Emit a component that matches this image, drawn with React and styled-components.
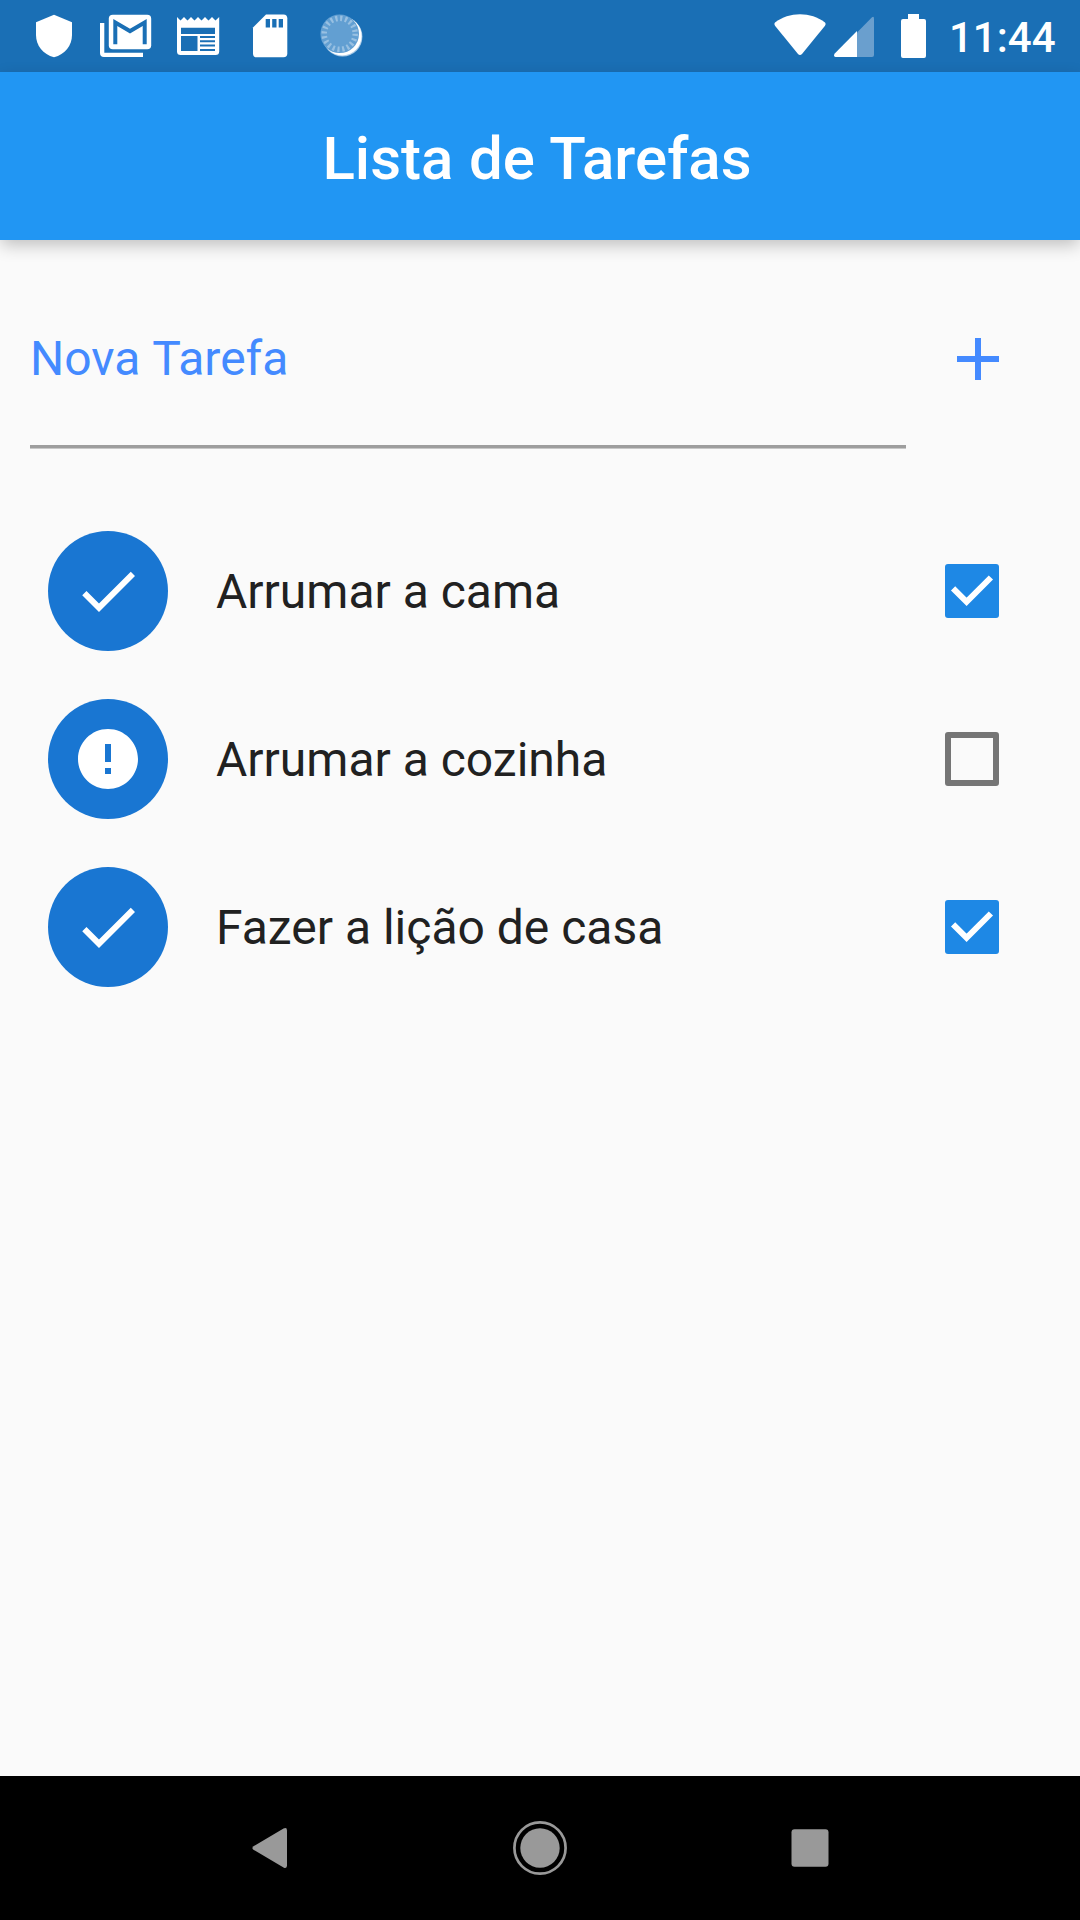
import React, { useState } from 'react';
import styled, { createGlobalStyle } from 'styled-components';

const primary = '#2196f3';
const primaryDark = '#1a6fb5';
const avatarBlue = '#1976d2';
const checkboxBlue = '#1e88e5';
const accent = '#448aff';
const background = '#fafafa';
const navGray = '#999999';

const initialTasks = [
  { id: 1, title: 'Arrumar a cama', done: true },
  { id: 2, title: 'Arrumar a cozinha', done: false },
  { id: 3, title: 'Fazer a lição de casa', done: true },
];

const ShieldIcon = () => (
  <SlotIcon viewBox="0 0 72 72">
    <path
      d="M36 14.7 L54 22.3 V35 C54 45.5 47 54.5 36 57.3 C25 54.5 18 45.5 18 35 V22.3 Z"
      fill="#fff"
    />
  </SlotIcon>
);

const GmailIcon = () => (
  <SlotIcon viewBox="0 0 72 72">
    <path d="M10 23 H14.3 V52.7 H53 V57 H14 Q10 57 10 53 Z" fill="#fff" />
    <rect x="18.8" y="14.8" width="42.4" height="34.4" rx="4" fill="#fff" />
    <path
      d="M23.3 19 L40 28.8 L56.7 19 V44.3 H52.7 V26 L40 33.6 L27.3 26 V44.3 H23.3 Z"
      fill={primaryDark}
    />
  </SlotIcon>
);

const NewsIcon = () => (
  <SlotIcon viewBox="0 0 72 72">
    <path
      d="M15 17 L18.5 20.5 L22 17 L25.5 20.5 L29 17 L32.5 20.5 L36 17 L39.5 20.5 L43 17 L46.5 20.5 L50 17 L53.5 20.5 L57.2 17 V51.5 Q57.2 55 53.5 55 H18.7 Q15 55 15 51.5 Z"
      fill="#fff"
    />
    <path
      d="M19 27.7 H53 V34 H19 Z M19 36 H35.5 V51 H19 Z M38 36 H53 V38 H38 Z M38 40.3 H53 V42.3 H38 Z M38 44.6 H53 V46.6 H38 Z M38 49 H53 V51 H38 Z"
      fill={primaryDark}
    />
  </SlotIcon>
);

const SdCardIcon = () => (
  <SlotIcon viewBox="0 0 72 72">
    <path
      d="M32 14.5 H49.5 Q53.3 14.5 53.3 18.3 V53.5 Q53.3 57.3 49.5 57.3 H22.8 Q19 57.3 19 53.5 V27.5 Z"
      fill="#fff"
    />
    <path
      d="M31.7 19 H36 V27.5 H31.7 Z M38.2 19 H42.5 V27.5 H38.2 Z M44.7 19 H49 V27.5 H44.7 Z"
      fill={primaryDark}
    />
  </SlotIcon>
);

const SyncIcon = () => (
  <SlotIcon viewBox="0 0 72 72">
    <circle cx="36.6" cy="36.7" r="19.8" fill="#a9cbe8" />
    <circle cx="36.2" cy="36" r="19.4" fill="#fff" />
    <circle cx="33.7" cy="33.8" r="19.3" fill="#629fd2" />
    <circle
      cx="33.7"
      cy="33.8"
      r="15.5"
      fill="none"
      stroke="#98c0e2"
      strokeWidth="5.5"
      strokeDasharray="2.2 2.669"
    />
  </SlotIcon>
);

const MaterialIcon = ({ path, size = 72 }) => (
  <svg width={size} height={size} viewBox="0 0 24 24" fill="currentColor">
    <path d={path} />
  </svg>
);

const addPath = 'M19 13h-6v6h-2v-6H5v-2h6V5h2v6h6v2z';
const checkPath = 'M9 16.17L4.83 12l-1.42 1.41L9 19 21 7l-1.41-1.41z';
const errorPath =
  'M12 2C6.48 2 2 6.48 2 12s4.48 10 10 10 10-4.48 10-10S17.52 2 12 2zm1 15h-2v-2h2v2zm0-4h-2V7h2v6z';

const StatusBar = () => (
  <StatusContainer>
    <Notifications>
      <ShieldIcon />
      <GmailIcon />
      <NewsIcon />
      <SdCardIcon />
      <SyncIcon />
    </Notifications>
    <SystemIcons>
      <svg width="52" height="72" viewBox="0 0 52 72">
        <path
          d="M1 22.5 C15 11.5 37 11.5 51 22.5 Q52.2 24 51 25.8 L28.2 53.8 Q26 56.3 23.8 53.8 L1 25.8 Q-0.2 24 1 22.5 Z"
          fill="#fff"
        />
      </svg>
      <Signal width="40" height="72" viewBox="0 0 40 72">
        <path d="M23 32.5 L38 17.3 Q40 16 40 18.5 V55 Q40 57 38 57 H23 Z" fill="#6a9fce" />
        <path d="M23 31 V57 H1.5 Q-0.8 56.5 0.5 53.8 Z" fill="#fff" />
      </Signal>
      <Battery width="25" height="72" viewBox="0 0 25 72">
        <path
          d="M7 14 H18 V19 H23 Q25 19 25 21 V56 Q25 58 23 58 H2 Q0 58 0 56 V21 Q0 19 2 19 H7 Z"
          fill="#fff"
        />
      </Battery>
      <Clock>11:44</Clock>
    </SystemIcons>
  </StatusContainer>
);

const Checkbox = ({ checked }) => (
  <CheckboxBox $checked={checked}>
    {checked && (
      <svg width="54" height="54" viewBox="0 0 54 54">
        <path
          d="M8.1 24.3 L21.6 37.8 L45.9 13.5"
          fill="none"
          stroke="#fff"
          strokeWidth="6"
        />
      </svg>
    )}
  </CheckboxBox>
);

const Task = ({ task, onToggle }) => (
  <TaskRow onClick={() => onToggle(task.id)}>
    <Avatar>
      <MaterialIcon path={task.done ? checkPath : errorPath} />
    </Avatar>
    <TaskTitle>{task.title}</TaskTitle>
    <Checkbox checked={task.done} />
  </TaskRow>
);

const NavigationBar = () => (
  <NavContainer>
    <svg width="72" height="72" viewBox="0 0 72 72">
      <path
        d="M19.5 34.2 L49.5 16.6 Q53 15 53 18.5 V53.5 Q53 57 49.5 55.4 L19.5 37.8 Q17.3 36 19.5 34.2 Z"
        fill={navGray}
      />
    </svg>
    <svg width="72" height="72" viewBox="0 0 72 72">
      <circle cx="36" cy="36" r="25.6" fill="none" stroke={navGray} strokeWidth="2.7" />
      <circle cx="36" cy="36" r="19.7" fill={navGray} />
    </svg>
    <svg width="72" height="72" viewBox="0 0 72 72">
      <rect x="17.5" y="17.3" width="37" height="37.4" rx="3" fill={navGray} />
    </svg>
  </NavContainer>
);

const App = () => {
  const [tasks, setTasks] = useState(initialTasks);

  const handleToggle = id =>
    setTasks(tasks.map(task => (task.id === id ? { ...task, done: !task.done } : task)));

  return (
    <Screen>
      <GlobalStyle />
      <StatusBar />
      <AppBar>
        <Title>Lista de Tarefas</Title>
      </AppBar>
      <Body>
        <NewTask>
          <Field>
            <FieldLabel>Nova Tarefa</FieldLabel>
          </Field>
          <AddButton aria-label="Adicionar">
            <MaterialIcon path={addPath} />
          </AddButton>
        </NewTask>
        <TaskList>
          {tasks.map(task => (
            <Task key={task.id} task={task} onToggle={handleToggle} />
          ))}
        </TaskList>
      </Body>
      <NavigationBar />
    </Screen>
  );
};

export default App;

const GlobalStyle = createGlobalStyle`
  * {
    box-sizing: border-box;
  }

  body {
    margin: 0;
    background: ${background};
    font-family: Roboto, sans-serif;
  }

  svg {
    display: block;
    flex-shrink: 0;
  }
`;

const Screen = styled.div`
  display: flex;
  flex-direction: column;
  width: 1080px;
  height: 1920px;
  overflow: hidden;
  background: ${background};
`;

const StatusContainer = styled.div`
  display: flex;
  justify-content: space-between;
  height: 72px;
  padding: 0 25px 0 18px;
  background: ${primaryDark};
  flex-shrink: 0;
`;

const Notifications = styled.div`
  display: flex;
`;

const SlotIcon = styled.svg`
  width: 72px;
  height: 72px;
`;

const SystemIcons = styled.div`
  display: flex;
  align-items: center;
`;

const Signal = styled.svg`
  margin-left: 8px;
`;

const Battery = styled.svg`
  margin-left: 27px;
`;

const Clock = styled.span`
  width: 106px;
  margin-left: 23px;
  padding-top: 3px;
  font-size: 42px;
  font-weight: 500;
  line-height: 72px;
  white-space: nowrap;
  color: #fff;
`;

const AppBar = styled.header`
  display: flex;
  align-items: center;
  justify-content: center;
  height: 168px;
  padding: 6px 6px 0 0;
  background: ${primary};
  box-shadow: 0 6px 16px -1px rgba(0, 0, 0, 0.24);
  flex-shrink: 0;
`;

const Title = styled.h1`
  margin: 0;
  font-size: 60px;
  font-weight: 500;
  line-height: 72px;
  word-spacing: 0.8px;
  white-space: nowrap;
  color: #fff;
`;

const Body = styled.main`
  display: flex;
  flex-direction: column;
  flex: 1;
`;

const NewTask = styled.div`
  display: flex;
  align-items: flex-start;
  padding: 47px 30px 0;
`;

const Field = styled.div`
  width: 876px;
  height: 161px;
  padding-top: 44px;
  border-bottom: 3px solid #9e9e9e;
  box-shadow: 0 1px 0 #c8c8c8;
`;

const FieldLabel = styled.label`
  display: block;
  font-size: 48px;
  line-height: 56px;
  word-spacing: 1px;
  white-space: nowrap;
  color: ${accent};
`;

const AddButton = styled.button`
  display: flex;
  align-items: center;
  justify-content: center;
  width: 144px;
  height: 144px;
  padding: 0;
  border: 0;
  background: none;
  color: ${accent};
`;

const TaskList = styled.ul`
  margin: 59px 0 0;
  padding: 0;
  list-style: none;
`;

const TaskRow = styled.li`
  display: flex;
  align-items: center;
  height: 168px;
  padding: 0 81px 0 48px;
`;

const Avatar = styled.div`
  display: flex;
  align-items: center;
  justify-content: center;
  width: 120px;
  height: 120px;
  border-radius: 50%;
  background: ${avatarBlue};
  color: #fff;
`;

const TaskTitle = styled.span`
  flex: 1;
  margin-left: 48px;
  padding-top: 2px;
  font-size: 48px;
  line-height: 56px;
  white-space: nowrap;
  color: #212121;
`;

const CheckboxBox = styled.div`
  width: 54px;
  height: 54px;
  border: ${({ $checked }) => ($checked ? 0 : '6px solid #757575')};
  border-radius: 3px;
  background: ${({ $checked }) => ($checked ? checkboxBlue : 'transparent')};
`;

const NavContainer = styled.nav`
  display: flex;
  align-items: center;
  justify-content: center;
  gap: 198px;
  height: 144px;
  background: #000;
  flex-shrink: 0;
`;
